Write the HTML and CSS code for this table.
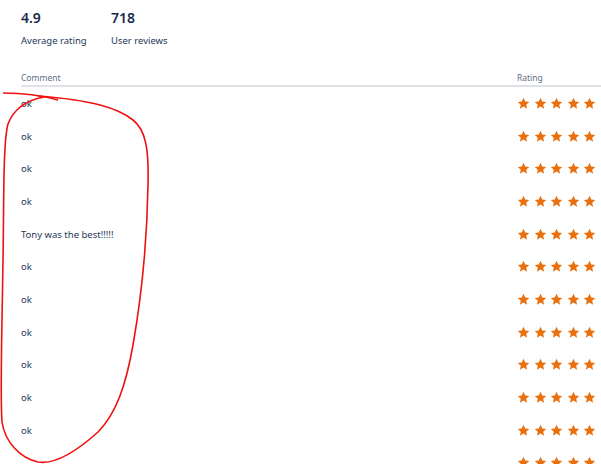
FILE: index.html
```html
<!DOCTYPE html>
<html lang="en">
<head>
    <meta charset="UTF-8">
    <meta name="viewport" content="width=device-width, initial-scale=1.0">
    <title>Reviews</title>
    <link rel="stylesheet" href="styles.css">
</head>
<body>
    <div class="page">
        <div class="stats">
            <div class="stat">
                <div class="stat-value">4.9</div>
                <div class="stat-label">Average rating</div>
            </div>
            <div class="stat">
                <div class="stat-value">718</div>
                <div class="stat-label">User reviews</div>
            </div>
        </div>
        <div class="reviews">
            <div class="head">
                <span>Comment</span>
                <span>Rating</span>
            </div>
            <div id="rows"></div>
        </div>
        <svg class="scribble" width="601" height="464" viewBox="0 0 601 464">
            <path d="M3,93 C20,93 40,95 58,100" />
            <path d="M44,97 C28,100 14,108 8,124 C3,142 4,200 3,260 C2,330 0,395 2,422 C5,442 20,458 38,462 C56,465 78,450 98,432 C116,414 126,385 133,345 C140,305 147,245 148,185 C149,150 146,130 133,120 C118,108 92,100 38,96" />
        </svg>
    </div>
    <script>
        // 评论数据（最后一行只露出星星）
        const comments = ['ok', 'ok', 'ok', 'ok', 'Tony was the best!!!!!', 'ok', 'ok', 'ok', 'ok', 'ok', 'ok', ''];
        const star = '<svg class="star" viewBox="0 0 24 24"><polygon points="12,1.5 15.2,8.3 22.5,9.1 17,14.1 18.6,21.5 12,17.7 5.4,21.5 7,14.1 1.5,9.1 8.8,8.3"/></svg>';

        const rows = document.getElementById('rows');
        comments.forEach(function (text) {
            const row = document.createElement('div');
            row.className = 'row';
            row.innerHTML = `
                <span class="comment">${text}</span>
                <span class="stars">${star.repeat(5)}</span>
            `;
            rows.appendChild(row);
        });
    </script>
</body>
</html>
```

FILE: styles.css
```css
body {
    font-family: "Noto Sans", "Open Sans", sans-serif;
    color: #172b4d;
    background-color: white;
    margin: 0;
    overflow: hidden;
}
.page {
    position: relative;
    height: 464px;
    overflow: hidden;
}
.stats {
    display: flex;
    padding: 9px 0 0 21px;
}
.stat {
    width: 90px;
    white-space: nowrap;
}
.stat-value {
    font-size: 14px;
    font-weight: 600;
    line-height: 18px;
}
.stat-label {
    font-size: 9.5px;
    line-height: 14px;
    margin-top: 7px;
    color: #253858;
}
.reviews {
    margin-top: 24px;
    padding-left: 21px;
}
.head {
    display: grid;
    grid-template-columns: 1fr 84px;
    font-size: 8.5px;
    color: #5e6c84;
    line-height: 12px;
    padding-bottom: 1px;
    border-bottom: 2px solid #dfe1e6;
}
.row {
    display: grid;
    grid-template-columns: 1fr 84px;
    align-items: center;
    height: 32.7px;
    font-size: 9.5px;
    color: #253858;
}
.stars {
    display: flex;
    gap: 3.5px;
}
.star {
    width: 13px;
    height: 13px;
    fill: #e8700f;
}
.scribble {
    position: absolute;
    left: 0;
    top: 0;
    fill: none;
    stroke: #f01010;
    stroke-width: 1.6;
    pointer-events: none;
}
```
